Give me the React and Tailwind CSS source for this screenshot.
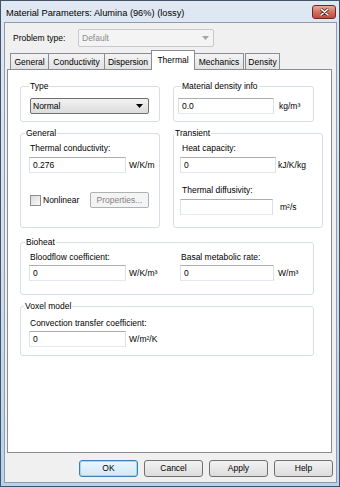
import { useState } from "react";

const Field = ({ value, w }) => (
  <div
    className={`h-[16px] bg-white border border-[#abadb3] border-x-[#dbdfe6] border-b-[#e3e9ef] pl-[3px] flex items-center ${w}`}
  >
    {value}
  </div>
);

const Group = ({ title, lx, className, children }) => (
  <fieldset className={`border border-[#d5dfe5] rounded-[3px] min-w-0 ${className}`}>
    <legend className={`px-[1px] leading-[11px] ${lx}`}>{title}</legend>
    {children}
  </fieldset>
);

const Arrow = ({ color }) => (
  <svg width="7" height="4" viewBox="0 0 7 4">
    <path d="M0 0h7L3.5 4z" fill={color} />
  </svg>
);

const tabs = [
  { id: "general", label: "General", w: "w-[39px]" },
  { id: "conductivity", label: "Conductivity", w: "w-[57px] -ml-px" },
  { id: "dispersion", label: "Dispersion", w: "w-[48px] -ml-px" },
  { id: "thermal", label: "Thermal", w: "w-[44px] -ml-px" },
  { id: "mechanics", label: "Mechanics", w: "w-[50px] -ml-px" },
  { id: "density", label: "Density", w: "w-[35px] ml-px" },
];

const buttons = ["OK", "Cancel", "Apply", "Help"];

export default function App() {
  const [active, setActive] = useState("thermal");

  return (
    <div className="w-[340px] h-[487px] flex flex-col border border-[#44536a] bg-linear-to-b from-[#dfe8f3] via-[#d2dfee] to-[#b7d3ec] font-['Liberation_Sans',Arial,sans-serif] text-[8.5px] text-black select-none">
      {/* title bar */}
      <div className="h-[21px] flex items-start justify-between">
        <span className="mt-[6px] ml-[5px] text-[9.25px] leading-[12px]">
          Material Parameters: Alumina (96%) (lossy)
        </span>
        <div className="mt-[4px] mr-[3px] w-[24px] h-[14px] rounded-[3px] border border-[#6b2b22] bg-linear-to-b from-[#e9a99c] via-[#d3705f] to-[#c24a36] flex items-center justify-center">
          <svg width="9" height="8" viewBox="0 0 9 8">
            <path d="M1 1l7 6M8 1L1 7" stroke="#5b2a22" strokeWidth="3" strokeLinecap="round" />
            <path d="M1 1l7 6M8 1L1 7" stroke="#ffffff" strokeWidth="1.6" strokeLinecap="round" />
          </svg>
        </div>
      </div>

      {/* client area */}
      <div className="flex-1 ml-[3px] mr-[2px] mb-[3px] border border-[#8d9bad] bg-[#f0f0f0] flex flex-col">
        {/* problem type */}
        <div className="flex items-center pt-[6px] pl-[8px]">
          <span className="w-[65px] leading-[11px]">Problem type:</span>
          <div className="w-[136px] h-[18px] rounded-[2px] border border-[#c5c8cc] bg-[#f4f4f4] flex items-center justify-between pl-[3px] pr-[4px] text-[#8a8a8a]">
            <span>Default</span>
            <Arrow color="#a5a5a5" />
          </div>
        </div>

        {/* tabs */}
        <div className="relative z-10 flex items-end h-[19px] mt-[3px] pl-[5px]">
          {tabs.map((t) => {
            const on = t.id === active;
            return (
              <div
                key={t.id}
                onClick={() => setActive(t.id)}
                className={
                  on
                    ? `${t.w} h-[20px] -mb-px bg-white border border-b-0 border-[#898c95] flex items-center justify-center leading-[11px]`
                    : `${t.w} h-[16px] bg-linear-to-b from-[#f4f4f4] to-[#e2e2e2] border border-b-0 border-[#898c95] flex items-center justify-center pt-[1px] leading-[11px]`
                }
              >
                {t.label}
              </div>
            );
          })}
        </div>

        {/* tab panel */}
        <div className="flex-1 ml-[2px] mr-[4px] bg-white border border-[#898c95] pt-[11px] pl-[12px] flex flex-col">
          <div className="flex">
            <Group title="Type" lx="ml-[8px]" className="w-[140px] pb-[7px]">
              <div className="mt-[6px] ml-[9px] w-[119px] h-[16px] rounded-[2px] border border-[#707070] bg-linear-to-b from-[#f2f2f2] to-[#dcdcdc] flex items-center justify-between pl-[2px] pr-[5px]">
                <span>Normal</span>
                <Arrow color="#000000" />
              </div>
            </Group>
            <Group title="Material density info" lx="ml-[7px]" className="ml-[13px] w-[141px] pb-[7px]">
              <div className="mt-[6px] ml-[4px] flex items-center">
                <Field value="0.0" w="w-[96px]" />
                <span className="ml-[5px]">kg/m³</span>
              </div>
            </Group>
          </div>

          <div className="flex mt-[6px]">
            <Group title="General" lx="ml-[4px]" className="w-[140px] pb-[19px]">
              <div className="ml-[9px] mt-[4px] leading-[11px]">Thermal conductivity:</div>
              <div className="ml-[8px] mt-[3px] flex items-center">
                <Field value="0.276" w="w-[97px]" />
                <span className="ml-[3px]">W/K/m</span>
              </div>
              <div className="ml-[9px] mt-[19px] h-[16px] flex items-center">
                <div className="w-[60px] flex items-center">
                  <div className="w-[11px] h-[11px] border border-[#8e8f8f] bg-linear-to-br from-[#dcdcdc] to-[#f8f8f8]" />
                  <span className="ml-[2px]">Nonlinear</span>
                </div>
                <div className="w-[59px] h-[16px] rounded-[2px] border border-[#adb2b5] bg-[#f4f4f4] text-[#838383] flex items-center justify-center">
                  Properties...
                </div>
              </div>
            </Group>
            <Group title="Transient" lx="ml-[0px]" className="ml-[13px] w-[150px] pb-[12px]">
              <div className="ml-[8px] mt-[4px] leading-[11px]">Heat capacity:</div>
              <div className="ml-[6px] mt-[3px] flex items-center">
                <Field value="0" w="w-[96px]" />
                <span className="ml-[2px]">kJ/K/kg</span>
              </div>
              <div className="ml-[8px] mt-[12px] leading-[11px]">Thermal diffusivity:</div>
              <div className="ml-[6px] mt-[3px] flex items-center">
                <Field value="" w="w-[93px]" />
                <span className="ml-[7px]">m²/s</span>
              </div>
            </Group>
          </div>

          <Group title="Bioheat" lx="ml-[4px]" className="mt-[9px] w-[294px] pb-[13px]">
            <div className="flex mt-[4px] leading-[11px]">
              <div className="ml-[9px] w-[151px]">Bloodflow coefficient:</div>
              <div>Basal metabolic rate:</div>
            </div>
            <div className="flex items-center mt-[2px] ml-[8px]">
              <div className="w-[151px] flex items-center">
                <Field value="0" w="w-[97px]" />
                <span className="ml-[3px]">W/K/m³</span>
              </div>
              <Field value="0" w="w-[94px]" />
              <span className="ml-[4px]">W/m³</span>
            </div>
          </Group>

          <Group title="Voxel model" lx="ml-[3px]" className="mt-[6px] w-[294px] pb-[8px]">
            <div className="ml-[9px] mt-[6px] leading-[11px]">Convection transfer coefficient:</div>
            <div className="ml-[8px] mt-[2px] flex items-center">
              <Field value="0" w="w-[97px]" />
              <span className="ml-[3px]">W/m²/K</span>
            </div>
          </Group>
        </div>

        {/* dialog buttons */}
        <div className="flex justify-end gap-[6px] mt-[7px] mb-[5px] mr-[3px]">
          {buttons.map((b) => (
            <button
              key={b}
              className={
                b === "OK"
                  ? "w-[59px] h-[17px] rounded-[3px] border border-[#3c7fb1] bg-linear-to-b from-[#eaf6fd] to-[#d2e8f6] shadow-[inset_0_0_0_1px_#9fd8f6]"
                  : "w-[59px] h-[17px] rounded-[3px] border border-[#707070] bg-linear-to-b from-[#f2f2f2] to-[#dddddd]"
              }
            >
              {b}
            </button>
          ))}
        </div>
      </div>
    </div>
  );
}
